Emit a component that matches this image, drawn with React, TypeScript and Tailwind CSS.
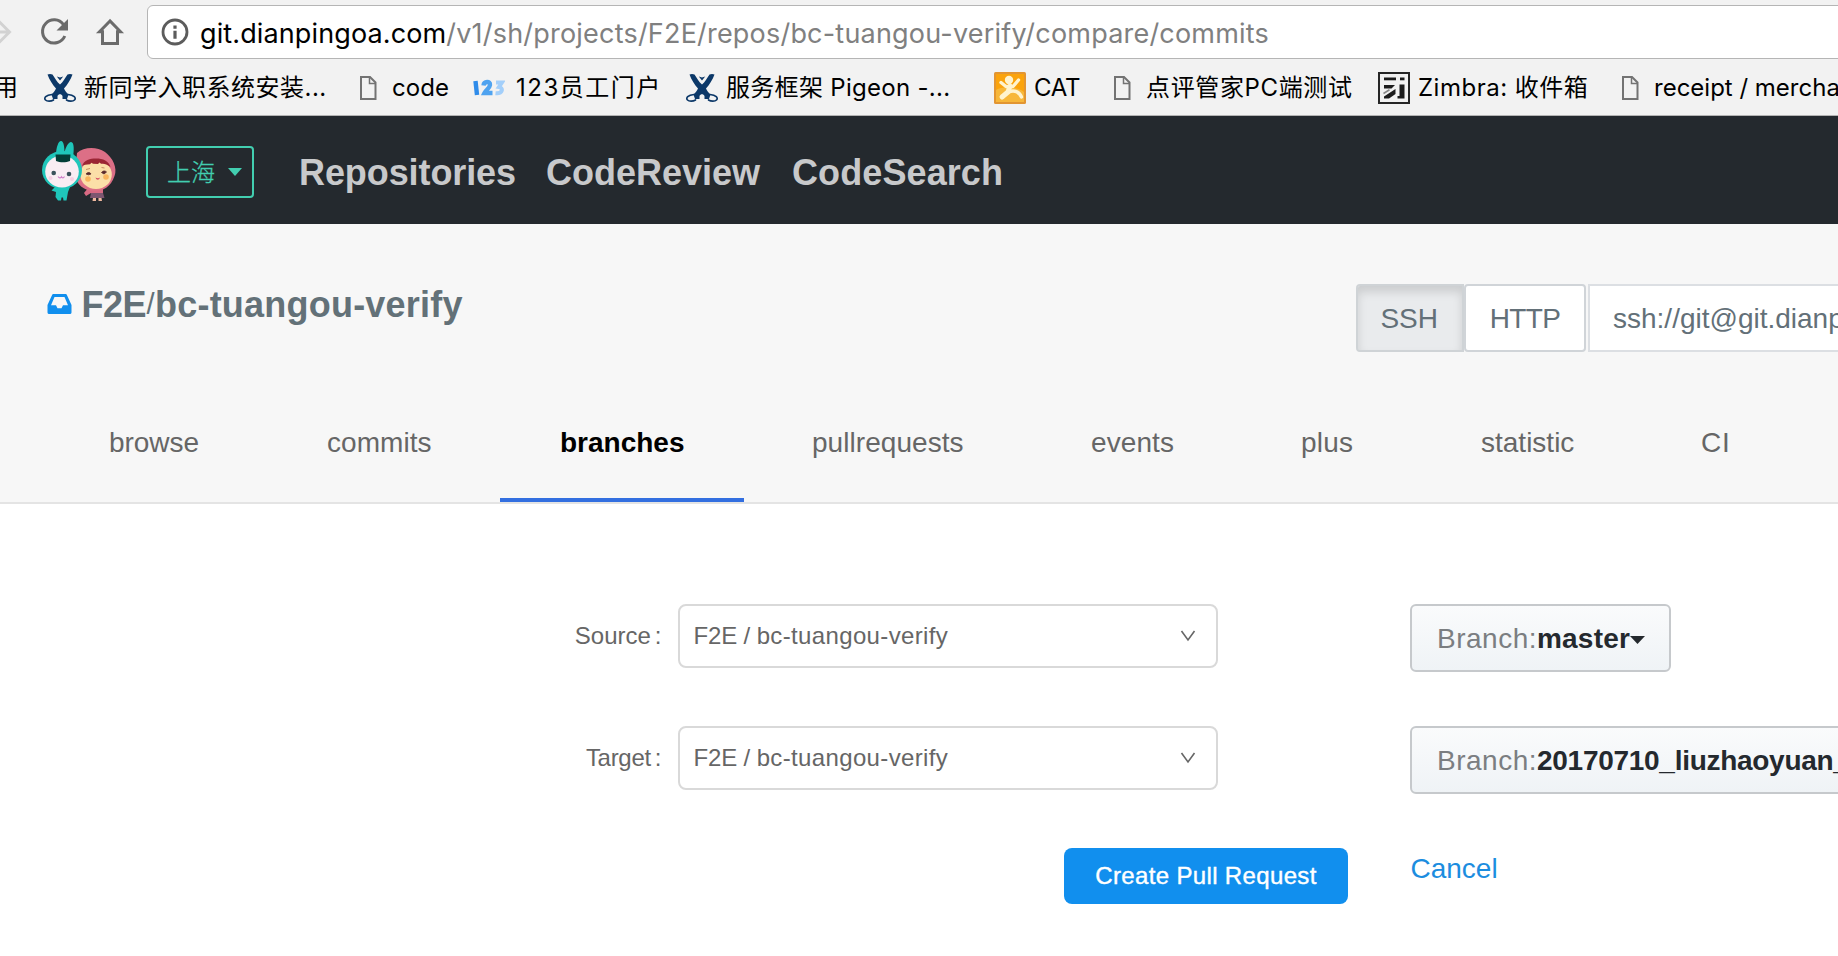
import type { ReactNode } from "react";

const SANS = "font-['Liberation_Sans',Arial,sans-serif]";

function PageIcon() {
  return (
    <svg width="17" height="24" viewBox="0 0 17 24" fill="none" stroke="#737373" strokeWidth="2">
      <path d="M1 1H10L15.500 6.500V23H1Z" />
      <path d="M9.500 1V7.500H15.500" strokeWidth="1.500" />
    </svg>
  );
}

function CrossIcon() {
  return (
    <svg width="32" height="30" viewBox="0 0 32 30">
      <g fill="#0c3868">
        <path d="M3.500 1.500C5 .8 7 .8 8.500 1.500C11 5 13 9 16 11.500C19 9 21 5 23.500 1.500C25 .8 27 .8 28.500 1.500C26.500 7 23.500 11.500 20 15.500C21 18 23 20 24.500 21.500L23 26H18.500L18.500 23C17.500 20.500 14.500 20.500 13.500 23V26H9L7.500 21.500C9 20 11 18 12 15.500C8.500 11.500 5.500 7 3.500 1.500Z" />
        <path d="M12.800 3.500L16 4.500L19.200 3.500L16 7.500Z" />
      </g>
      <g fill="none" stroke="#0c3868" strokeWidth="1.700" strokeLinecap="round">
        <path d="M8 21.500C2 22 -.5 25 1.500 27C3 28.500 7 28.500 9.500 27" />
        <path d="M24 21.500C30 22 32.500 25 30.500 27C29 28.500 25 28.500 22.500 27" />
      </g>
    </svg>
  );
}

function DigitsIcon() {
  return (
    <svg width="32" height="18" viewBox="0 0 32 18" fill="none">
      <path d="M2.500 2L4 16" stroke="#2f8cea" strokeWidth="4.400" />
      <path d="M10.500 6.500C11 2 17.500 2 17 6C16.500 9.500 13 11 11.500 14H19.500" stroke="#4fa3f0" strokeWidth="4.400" />
      <path d="M23 3.500H29L26 8C30.500 8.500 30 15 22.500 14.200" stroke="#a3cffa" strokeWidth="4" />
    </svg>
  );
}

function FigureIcon() {
  return (
    <svg width="32" height="32" viewBox="0 0 32 32">
      <rect width="32" height="32" rx="1.500" fill="#e29532" />
      <rect x="2" y="2" width="28" height="28" fill="#fba30b" />
      <path d="M2 18C8 14 22 14 30 20V30H2Z" fill="#f7b73a" />
      <circle cx="15" cy="8" r="4.200" fill="#fff3cf" />
      <g fill="none" stroke="#fff3cf" strokeWidth="3.400" strokeLinecap="round" strokeLinejoin="round">
        <path d="M7 10.500L12 14.500H19L24.500 8" />
        <path d="M16 14L14 20L8 25" strokeWidth="5" />
        <path d="M15 20C20 17.500 25.500 20 27.500 25" />
      </g>
    </svg>
  );
}

function MailIcon() {
  return (
    <svg width="32" height="32" viewBox="0 0 32 32">
      <rect x="1" y="1" width="30" height="30" fill="#f2f2f2" stroke="#262626" strokeWidth="2" />
      <g fill="#1c1c1c">
        <rect x="6" y="5.500" width="12" height="2.800" />
        <rect x="22" y="5.500" width="4.500" height="2.800" />
        <path d="M6 13H17L13.500 16.500H6Z" />
        <path d="M21.500 12.500H26.500V26.500H19.500V24H21.500Z" />
        <path d="M17.500 17V22L11 26.500H6V24.500Z" />
      </g>
      <path d="M5.500 21.500L11.500 17.800" stroke="#888" strokeWidth="1.600" />
    </svg>
  );
}

function Bookmark({ icon, label, cell, slot, track }: { icon: ReactNode; label: string; cell: string; slot: string; track: string }) {
  return (
    <div className={`flex h-full shrink-0 items-center ${cell}`}>
      <span className={`flex shrink-0 items-center ${slot}`}>{icon}</span>
      <span className={`whitespace-nowrap ${track}`}>{label}</span>
    </div>
  );
}

function BrowserBar() {
  return (
    <div className="h-[116px] shrink-0 overflow-hidden border-b border-[#b3b3b3] bg-[#f2f2f2]">
      <div className="flex h-[60px] items-start pt-[5px]">
        <div className="flex h-[54px] w-[147px] shrink-0 items-center">
          <svg width="147" height="54" viewBox="0 5 147 54" fill="none">
            <path d="M-8 32H9M-1 21.500L9.500 32L-1 42.500" stroke="#d2d2d2" strokeWidth="3" />
            <path d="M63.500 24.600A11.600 11.600 0 1 0 64.800 36" stroke="#6b6b6b" strokeWidth="3" />
            <path d="M68 19V30.500H56.500Z" fill="#6b6b6b" />
            <path d="M110 21L99.500 31.800H102.500V43.500H117.500V31.800H120.500Z" stroke="#6b6b6b" strokeWidth="3" />
          </svg>
        </div>
        <div className="-mr-2 flex h-[54px] flex-1 rounded-md border border-[#b5b5b5] bg-white font-['Inter',sans-serif] text-[27px] leading-[56px] text-[#808080]">
          <div className="flex h-[52px] w-[52px] shrink-0 items-center pl-[13px]">
            <svg width="28" height="28" viewBox="0 0 28 28">
              <circle cx="14" cy="14" r="12" fill="none" stroke="#5c5c5c" strokeWidth="2.800" />
              <path d="M12.400 7.500H15.600V10.700H12.400ZM12.400 12.800H15.600V20.800H12.400Z" fill="#5c5c5c" />
            </svg>
          </div>
          <span className="tracking-[0.204px] whitespace-nowrap">
            <span className="tracking-[0.12px] text-black">git.dianpingoa.com</span>
            /v1/sh/projects/F2E/repos/bc-tuangou-verify/compare/commits
          </span>
        </div>
      </div>
      <div className="flex h-[55px] items-center font-['Inter','Noto_Sans_CJK_SC',sans-serif] text-[24px] leading-[55px] text-black">
        <span className="ml-[-6px] w-[50px] shrink-0">用</span>
        <Bookmark icon={<CrossIcon />} label="新同学入职系统安装..." cell="w-[316px]" slot="w-[40px]" track="tracking-[0.5px]" />
        <Bookmark icon={<PageIcon />} label="code" cell="w-[113px]" slot="w-[32px]" track="tracking-[0.07px]" />
        <Bookmark icon={<DigitsIcon />} label="123员工门户" cell="w-[213px]" slot="w-[43px]" track="tracking-[1.5px]" />
        <Bookmark icon={<CrossIcon />} label="服务框架 Pigeon -..." cell="w-[308px]" slot="w-[40px]" track="tracking-[0.3px]" />
        <Bookmark icon={<FigureIcon />} label="CAT" cell="w-[120px]" slot="w-[40px]" track="tracking-[-0.29px]" />
        <Bookmark icon={<PageIcon />} label="点评管家PC端测试" cell="w-[264px]" slot="w-[32px]" track="tracking-[0.64px]" />
        <Bookmark icon={<MailIcon />} label="Zimbra: 收件箱" cell="w-[244px]" slot="w-[40px]" track="tracking-[0.5px]" />
        <Bookmark icon={<PageIcon />} label="receipt / merchant" cell="w-[260px]" slot="w-[32px]" track="tracking-normal" />
      </div>
    </div>
  );
}

function Mascots() {
  return (
    <svg width="80" height="66" viewBox="38 138 80 66">
      <g>
        <path d="M89 187L84 193L86 196L91 193V195H103V188Z" fill="#d86a83" />
        <path d="M91 193H103L104.500 198H90Z" fill="#7d5670" />
        <path d="M93 198H96V201H92.500ZM98.500 198H101.500L102 201H98.500Z" fill="#f0b9a0" />
        <path d="M77 153C84 146.500 97 146.500 105 152C113 158 117.500 168 114.500 176C111 187 103 191 94 191C84 191 76 184 75 175Z" fill="#dc6f86" />
        <ellipse cx="96" cy="174.500" rx="15.800" ry="14.500" fill="#fbdfa8" />
        <path d="M82 166C84 160 90 158.500 96 158.500C103 158.500 109 161 110.500 167C106 163.500 104 163.500 101 163.800L99.500 162.500L98 164L93 163.800L91.500 162.800L90 164.300C86 164.300 84 165 82 166Z" fill="#9b2634" />
        <circle cx="88" cy="179" r="2.800" fill="#f9b65e" />
        <circle cx="106" cy="177" r="2.800" fill="#f9b65e" />
        <path d="M86 174C87.500 172 90 172 91 174L88.500 174.800ZM101.500 172.500C103 170.500 105 170.500 106.500 172L104 174Z" fill="#5a2a2c" stroke="#5a2a2c" strokeWidth=".8" />
        <path d="M95.500 177.500C97 178.500 99 178.500 100 177.500C99 180.500 96.500 180.500 95.500 177.500Z" fill="#d64f64" />
        <path d="M86 169.500L90 168.500M101.500 167.500L104.500 168" stroke="#b97b54" strokeWidth=".8" />
      </g>
      <g>
        <path d="M56 156C56 147 58.500 141 61 141C64 141 64.500 148 64.500 153C65.500 147 68.500 142 71 142C74.500 142 74 151 73 157Z" fill="#1fc6ba" />
        <ellipse cx="62" cy="170" rx="20" ry="19" fill="#1fc6ba" />
        <path d="M55 187L51.500 190.500L56 192L55.500 197L58 200.500H61L61.500 197.500H63L63.500 200.500H66.500L68 192L70 187Z" fill="#1fc6ba" />
        <ellipse cx="62" cy="171.500" rx="16.800" ry="16" fill="#f9edf3" />
        <path d="M55.500 154.500H70.500L70 161C66 162.800 60 162.800 56 161Z" fill="#033d37" />
        <circle cx="53.700" cy="173" r="2.300" fill="#3a525b" />
        <circle cx="69" cy="174" r="2.300" fill="#3a525b" />
        <path d="M58 176.500C59.500 178.800 61 177.800 61.500 176.800C62 178 63.500 178.500 64.500 176.500" fill="none" stroke="#cf7fc8" strokeWidth="1.100" />
        <circle cx="50.500" cy="178" r="2" fill="#f6cfe3" />
        <circle cx="72" cy="179" r="2" fill="#f6cfe3" />
      </g>
    </svg>
  );
}

function NavBar() {
  return (
    <nav className={`flex h-[108px] shrink-0 items-center bg-[#24292e] pt-[4px] ${SANS}`}>
      <div className="ml-[38px] w-[108px] shrink-0 pb-[2px]">
        <Mascots />
      </div>
      <button className="flex h-[52px] w-[108px] shrink-0 items-center rounded-[4px] border-2 border-[#42ceb0] pl-[19px] text-[#42ceb0]">
        <span className="pb-[2px] font-['Noto_Sans_CJK_SC',sans-serif] text-[24px] leading-[46px] font-light [-webkit-text-stroke:0.3px_#42ceb0]">上海</span>
        <svg className="ml-[13px]" width="14" height="8" viewBox="0 0 14 8" fill="currentColor">
          <path d="M0 0H14L7 8Z" />
        </svg>
      </button>
      <div className="ml-[45px] flex pt-[2px] text-[36px] leading-[48px] font-bold text-[#c8c9cb]">
        <a className="w-[247px] tracking-[-0.09px]">Repositories</a>
        <a className="w-[246px]">CodeReview</a>
        <a className="tracking-[0.1px]">CodeSearch</a>
      </div>
    </nav>
  );
}

const tabs = [
  { label: "browse", cls: "w-[210px] tracking-[-0.05px]" },
  { label: "commits", cls: "w-[225px] tracking-[0.05px]" },
  { label: "branches", cls: "w-[244px]", active: true },
  { label: "pullrequests", cls: "w-[271px] tracking-[0.05px]" },
  { label: "events", cls: "w-[202px] tracking-[0.1px]" },
  { label: "plus", cls: "w-[172px] tracking-[0.2px]" },
  { label: "statistic", cls: "w-[212px]" },
  { label: "CI", cls: "w-[148px] tracking-[0.7px]" },
];

function RepoHeader() {
  return (
    <header className={`flex h-[280px] shrink-0 flex-col border-b-2 border-[#e4e4e4] bg-[#f7f7f7] pt-[60px] ${SANS}`}>
      <div className="flex h-[68px] items-start">
        <div className="flex h-[41px] w-[1356px] shrink-0 items-center pl-[47px] text-[36px] leading-[41px] font-bold text-[#637178]">
          <svg width="25" height="20" viewBox="0 0 25 20" className="mb-px shrink-0">
            <path
              fillRule="evenodd"
              fill="#118fee"
              d="M6.200 0H18.800Q19.500 0 19.800 .8L24.500 11V18.600Q24.500 20 23.300 20H1.700Q.5 20 .5 18.600V11L5.200 .8Q5.500 0 6.200 0ZM7.500 3L4 11.300H9L10.500 14.300H14.500L16 11.300H21L17.500 3Z"
            />
          </svg>
          <span className="ml-[9.500px] w-[65px] shrink-0 tracking-[-0.5px]">F2E</span>
          <span className="w-[8.500px] shrink-0 text-[29px] font-normal">/</span>
          <span className="tracking-[0.22px]">bc-tuangou-verify</span>
        </div>
        <div className="flex h-[68px] flex-1 overflow-hidden text-[28px] leading-[66px] text-[#637078]">
          <button className="h-[68px] w-[108px] shrink-0 rounded-l-[4px] border-2 border-[#cfd3d6] bg-[#e9ebed] pl-[22.500px] text-left tracking-[-0.1px] shadow-[inset_0_6px_10px_rgba(0,0,0,0.13)]">SSH</button>
          <button className="h-[68px] w-[122px] shrink-0 rounded-[4px] border-2 border-[#d0d4d8] bg-white text-center tracking-[-0.6px]">HTTP</button>
          <div className="ml-[2px] h-[68px] w-[300px] shrink-0 border-2 border-[#dcdfe3] bg-white pl-[23px] whitespace-nowrap">ssh://git@git.dianpingoa.com</div>
        </div>
      </div>
      <div className="mt-[32px] ml-[49px] flex h-[118px] gap-[8px] overflow-hidden text-[28px] leading-[118px] text-[#666]">
        {tabs.map((t) => (
          <a
            key={t.label}
            className={`block h-[118px] shrink-0 pl-[60px] ${t.cls} ${t.active ? "border-b-4 border-[#336fe0] font-bold text-black" : ""}`}
          >
            {t.label}
          </a>
        ))}
      </div>
    </header>
  );
}

function FormRow({ label, track, branch, branchTrack }: { label: string; track: string; branch: string; branchTrack: string }) {
  return (
    <div className="flex h-[68px] items-start">
      <div className="flex w-[678px] shrink-0 justify-end gap-[4px] pr-[16.500px] text-[24px] leading-[64px] text-[#666]">
        <span className={track}>{label}</span>
        <span>:</span>
      </div>
      <div className="flex h-[64px] w-[540px] shrink-0 items-center justify-between rounded-[8px] border-2 border-[#d9d9d9] bg-white pr-[20px] pl-[13.500px] text-[24px] leading-[60px] text-[#666]">
        <span className="tracking-[0.36px]">
          <span className="tracking-[-0.15px]">F2E / </span>
          bc-tuangou-verify
        </span>
        <svg width="16" height="12" viewBox="0 0 16 12" fill="none" stroke="#666" strokeWidth="1.600" className="mb-[1px]">
          <path d="M1.500 1L8 10L14.500 1" />
        </svg>
      </div>
      <button className="ml-[192px] flex h-[68px] shrink-0 items-center rounded-[6px] border-2 border-[#c6c9cc] bg-linear-to-b from-[#fafbfc] to-[#eff3f6] pr-[24px] pl-[25px] text-[28px] leading-[62px] whitespace-nowrap text-[#24292e]">
        <span className="w-[100px] shrink-0 pt-[2px] text-left tracking-[0.5px] text-[#7b7e81]">Branch:</span>
        <span className={`pt-[2px] font-bold ${branchTrack}`}>{branch}</span>
        <svg className="mt-[4px] shrink-0" width="15" height="8" viewBox="0 0 15 8" fill="currentColor">
          <path d="M0 0H15L7.500 8Z" />
        </svg>
      </button>
    </div>
  );
}

export default function App() {
  return (
    <div className="flex h-[956px] w-[1838px] flex-col overflow-hidden bg-white">
      <BrowserBar />
      <NavBar />
      <RepoHeader />
      <main className={`flex flex-1 flex-col gap-[54px] overflow-hidden pt-[100px] ${SANS}`}>
        <FormRow label="Source" track="" branch="master" branchTrack="tracking-[0.2px]" />
        <FormRow label="Target" track="tracking-[-0.3px]" branch="20170710_liuzhaoyuan_verify" branchTrack="tracking-[-0.28px]" />
        <div className="flex items-start">
          <button className="ml-[1064px] h-[56px] w-[284px] shrink-0 rounded-[8px] bg-[#118fee] text-center text-[24px] leading-[56px] tracking-[0.35px] text-white [-webkit-text-stroke:0.4px_white]">
            Create Pull Request
          </button>
          <a className="ml-[62.500px] text-[28px] leading-[42px] text-[#1c8ddf]">Cancel</a>
        </div>
      </main>
    </div>
  );
}
